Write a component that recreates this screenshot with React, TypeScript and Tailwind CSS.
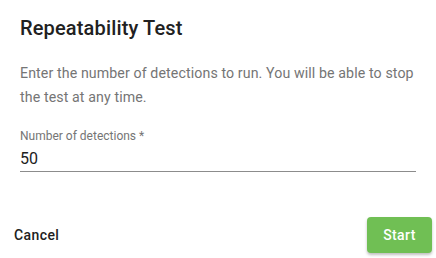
export default function App() {
  return (
    <div className="w-[436px] h-[258px] bg-white flex flex-col font-['Roboto',sans-serif]">
      <h2 className="pt-[12px] px-[20px] text-[20px] leading-[32px] font-medium text-[#212121] tracking-[0.15px]">
        Repeatability Test
      </h2>

      <p className="mt-[17px] pl-[20px] pr-[16px] text-[14.2px] leading-[24px] text-[#757575] tracking-[0.1px]">
        Enter the number of detections to run. You will be able to stop the test at any time.
      </p>

      <div className="mt-[19px] mx-[20px] flex flex-col">
        <label className="text-[12px] leading-[16px] text-[#757575]">Number of detections *</label>
        <input
          type="text"
          defaultValue="50"
          className="h-[28px] pt-[1px] text-[16px] leading-[24px] text-[#212121] outline-none border-b border-[#8c8c8c] bg-transparent"
        />
      </div>

      <div className="mt-auto flex items-center justify-between pl-[14px] pr-[4px] pb-[5px]">
        <button className="text-[14px] font-medium text-[#212121] tracking-[0.4px]">Cancel</button>
        <button className="w-[65px] h-[36px] rounded-[4px] bg-[#70bf54] text-white text-[14px] font-medium tracking-[0.4px] shadow-[0_2px_3px_rgba(0,0,0,0.25)]">
          Start
        </button>
      </div>
    </div>
  );
}
